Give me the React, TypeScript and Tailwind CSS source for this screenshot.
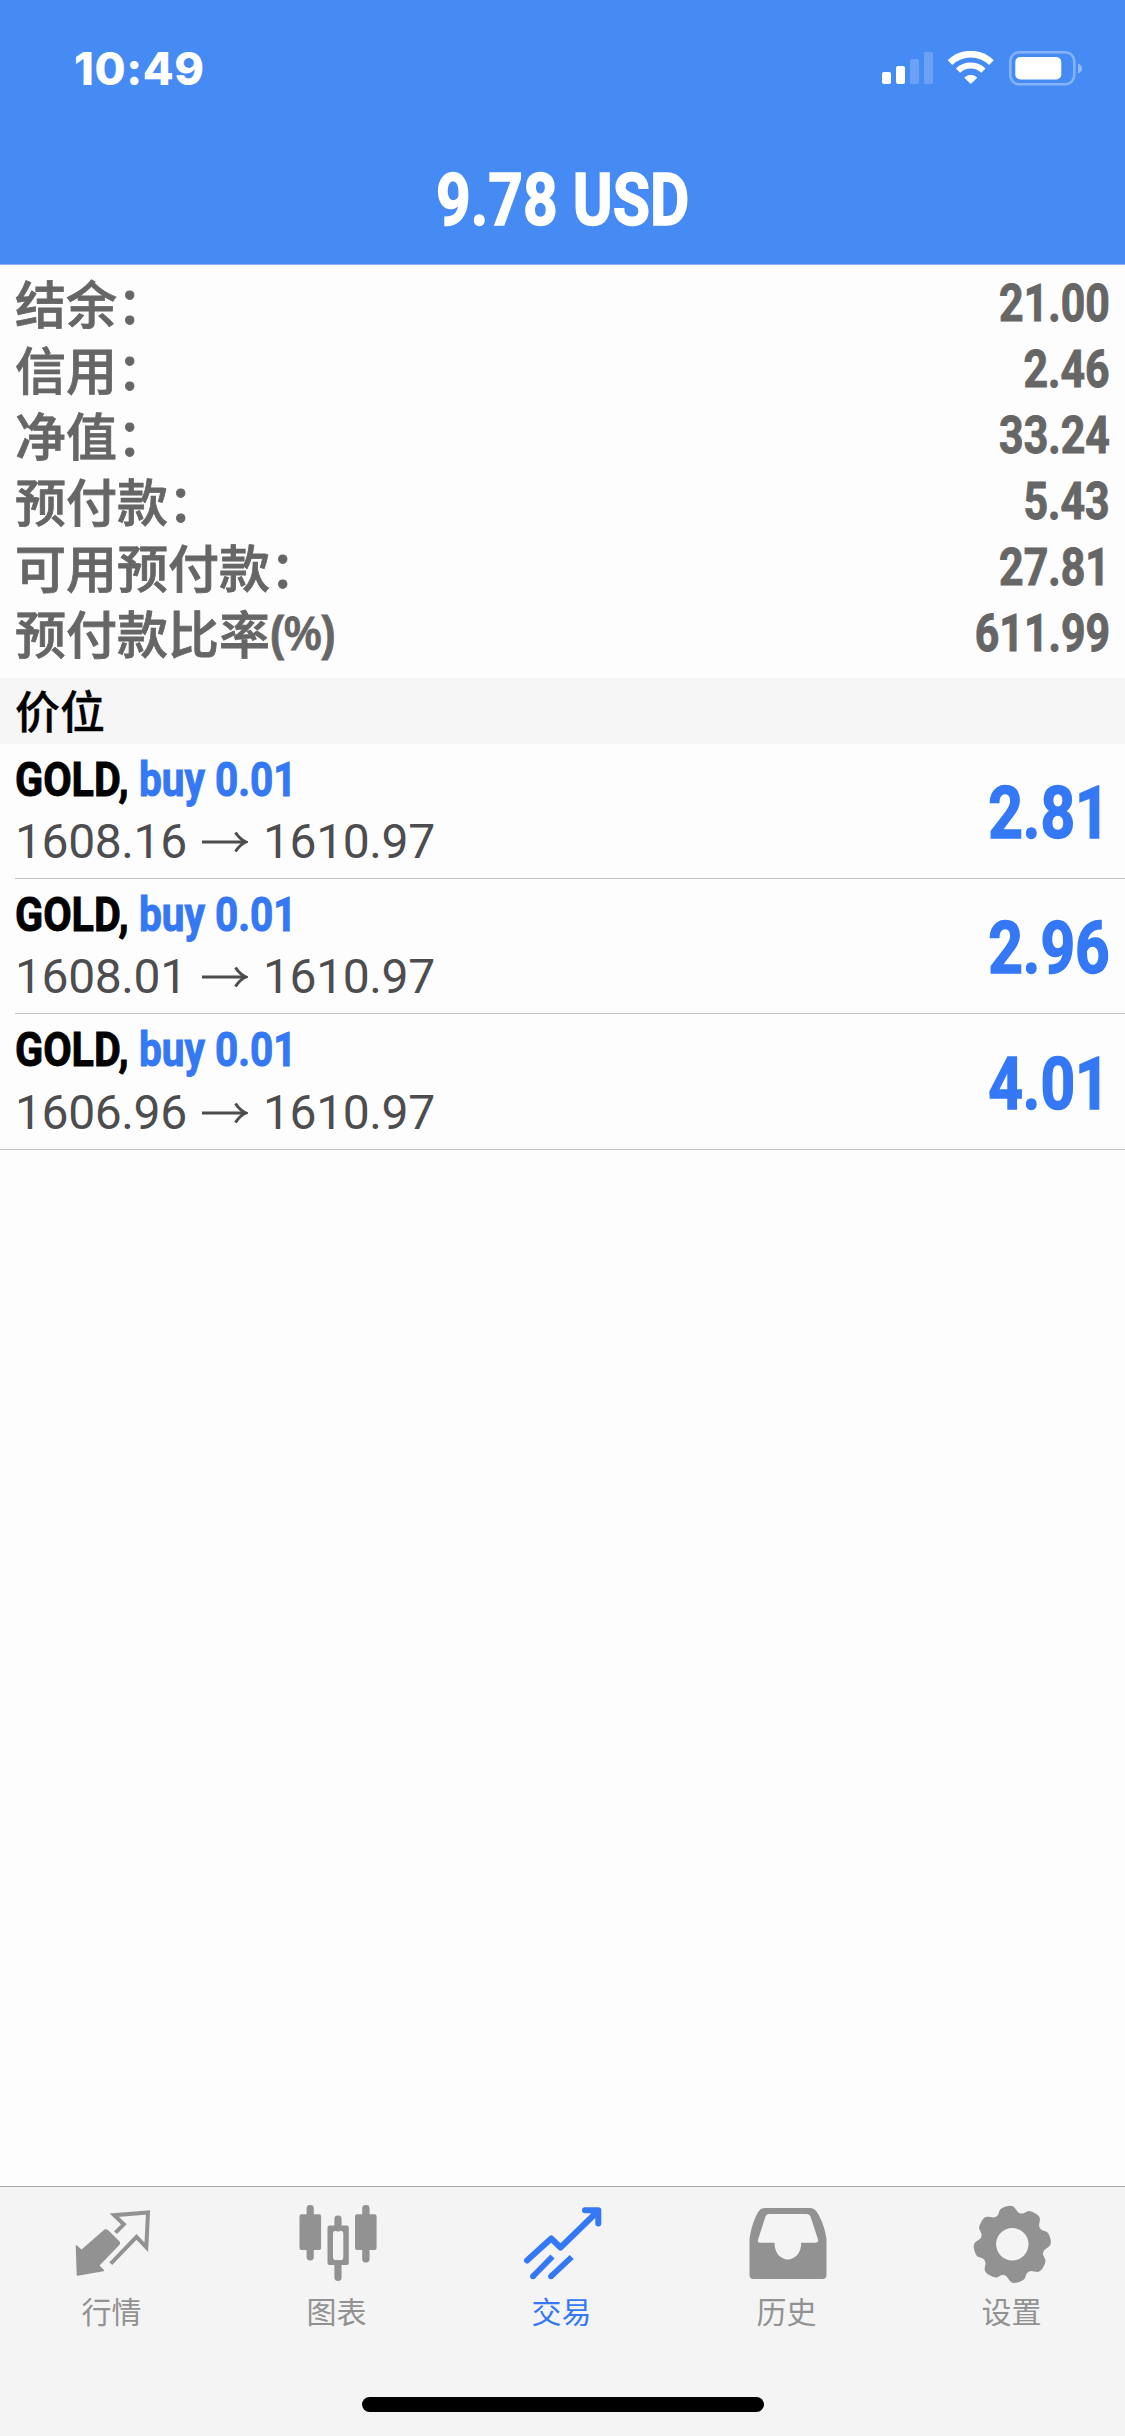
import type { ReactNode } from "react";
import clsx from "clsx";

const summary = [
  { label: "结余：", value: "21.00" },
  { label: "信用：", value: "2.46" },
  { label: "净值：", value: "33.24" },
  { label: "预付款：", value: "5.43" },
  { label: "可用预付款：", value: "27.81" },
  { label: "预付款比率", unit: "(%)", value: "611.99" },
];

const positions = [
  { symbol: "GOLD,", side: "buy 0.01", open: "1608.16", current: "1610.97", profit: "2.81" },
  { symbol: "GOLD,", side: "buy 0.01", open: "1608.01", current: "1610.97", profit: "2.96" },
  { symbol: "GOLD,", side: "buy 0.01", open: "1606.96", current: "1610.97", profit: "4.01" },
];

const QuotesIcon = () => (
  <svg viewBox="0 0 80 80" className="size-20" fill="none">
    <path
      d="M42.5 28.7 50.8 20.3 41.2 11.2 75 8.5 73.3 43.3 63.5 32.8 37.8 59.7"
      stroke="currentColor"
      strokeWidth="4"
    />
    <path
      d="M3.5 42 8.5 46.5 30.5 27.3Q33 25 35.5 27.5L45.5 37.5Q47 39 45.5 40.8L25.5 61.5 30.3 66.5 4.5 71Z"
      fill="currentColor"
      stroke="currentColor"
      strokeWidth="1.6"
      strokeLinejoin="round"
    />
  </svg>
);

const ChartIcon = () => (
  <svg viewBox="0 0 80 80" className="size-20" fill="currentColor">
    <rect x="1.5" y="10.3" width="21.6" height="35.8" rx="2" />
    <rect x="8.6" y="1" width="7.2" height="55.4" rx="3.4" />
    <rect x="57" y="10.3" width="21.6" height="35.8" rx="2" />
    <rect x="64.2" y="1" width="7.4" height="57.4" rx="3.4" />
    <rect x="36.4" y="11.5" width="7.2" height="16" rx="3.4" />
    <rect x="36.4" y="56" width="7.2" height="21" rx="3.4" />
    <path
      fillRule="evenodd"
      d="M31.5 21.6h17.3a2 2 0 0 1 2 2v35.5a2 2 0 0 1-2 2H31.5a2 2 0 0 1-2-2V23.6a2 2 0 0 1 2-2ZM38 26.7a3 3 0 0 0-3 3v23.5a3 3 0 0 0 3 3h4.3a3 3 0 0 0 3-3V29.7a3 3 0 0 0-3-3Z"
    />
  </svg>
);

const TradeIcon = () => (
  <svg viewBox="0 0 80 80" className="size-20" fill="none" stroke="currentColor">
    <path
      d="M4 56.5 28.2 34.5 37.5 43.5 74 8"
      strokeWidth="6"
      strokeLinecap="round"
      strokeLinejoin="round"
    />
    <path d="M62 6.2H75.3V19.5" strokeWidth="6" strokeLinecap="round" strokeLinejoin="round" />
    <path d="M64 5.5H76V17Z" fill="currentColor" stroke="none" />
    <path d="M10 72.3 29.5 52.5M28 72.3 48.7 53" strokeWidth="5.8" />
    <circle cx="10" cy="72.3" r="2.9" fill="currentColor" stroke="none" />
    <circle cx="28" cy="72.3" r="2.9" fill="currentColor" stroke="none" />
  </svg>
);

const HistoryIcon = () => (
  <svg viewBox="0 0 80 80" className="size-20" fill="currentColor">
    <path
      fillRule="evenodd"
      d="M17 4H62Q66 4 68.5 7.5C73 14 77 24 78.5 35V71Q78.5 75 74.5 75H5.5Q1.5 75 1.5 71V35C3 24 6.5 14 10.5 7.5Q12.5 4 17 4ZM20.5 10Q18.5 10 17.5 12.5L9.9 36Q9.2 38.8 12 38.8H26.5C26.5 61 53.2 61 53.2 38.8H67.5Q71 38.8 70 35.5L62.5 12.5Q61.5 10 59 10Z"
    />
  </svg>
);

const polar = (radius: number, degrees: number) => {
  const angle = (degrees * Math.PI) / 180;
  return `${(39.3 + radius * Math.cos(angle)).toFixed(2)} ${(40.3 + radius * Math.sin(angle)).toFixed(2)}`;
};

// eight teeth, turned a little anticlockwise
const gearPath = Array.from({ length: 8 }, (_, i) => {
  const a = i * 45 - 98;
  return `${i === 0 ? "M" : "L"}${polar(36.5, a - 12)}Q${polar(38.3, a - 9)} ${polar(38.5, a)}T${polar(36.5, a + 12)}L${polar(32.6, a + 18)}Q${polar(31.4, a + 22.5)} ${polar(32.6, a + 27)}`;
}).join("");

const SettingsIcon = () => (
  <svg viewBox="0 0 80 80" className="size-20" fill="currentColor">
    <path
      fillRule="evenodd"
      d={`${gearPath}ZM23.1 40.3a16.2 16.2 0 1 0 32.4 0a16.2 16.2 0 1 0-32.4 0Z`}
    />
  </svg>
);

const tabs: { label: string; icon: () => ReactNode; active?: boolean }[] = [
  { label: "行情", icon: QuotesIcon },
  { label: "图表", icon: ChartIcon },
  { label: "交易", icon: TradeIcon, active: true },
  { label: "历史", icon: HistoryIcon },
  { label: "设置", icon: SettingsIcon },
];

const StatusIcons = () => (
  <svg viewBox="0 0 204 36" className="h-9 w-[204px]" fill="currentColor">
    <rect x="2" y="21" width="9" height="12" rx="2" />
    <rect x="16" y="15" width="9" height="18" rx="2" />
    <rect x="30" y="8" width="9" height="25" rx="2" opacity="0.2" />
    <rect x="44" y="1" width="9" height="32" rx="2" opacity="0.2" />
    <g fill="none" stroke="currentColor">
      <path d="M70 11.6A29.5 29.5 0 0 1 111.4 11.6" strokeWidth="6.6" />
      <path d="M78 19.6A18.3 18.3 0 0 1 103.4 19.6" strokeWidth="6" />
    </g>
    <path d="M84.8 26.7A9 9 0 0 1 96.8 26.7L90.8 32.5Z" stroke="currentColor" strokeLinejoin="round" />
    <rect x="130.3" y="1.3" width="64" height="32" rx="9" fill="none" stroke="currentColor" strokeWidth="2.6" opacity="0.35" />
    <path d="M198 12.5Q202 14 202 17.5T198 22.5Z" opacity="0.4" />
    <rect x="135.3" y="6" width="46" height="22.5" rx="5" />
  </svg>
);

const ArrowRight = () => (
  <svg viewBox="0 0 46 22" className="h-[22px] w-[46px] shrink-0" fill="none" stroke="currentColor" strokeWidth="3">
    <path d="M0 11H44M33.5 1.5Q37.5 8 44 11Q37.5 14 33.5 20.5" />
  </svg>
);

export default function App() {
  return (
    <div className="flex h-[2436px] w-[1125px] flex-col overflow-hidden bg-[#fdfdfd] font-['Roboto','Noto_Sans_CJK_SC',sans-serif]">
      <header className="h-[265px] border-b border-[#8fb5f0] bg-[#468bf4] text-white">
        <div className="flex h-[138px] items-center justify-between pr-[41px] pl-[74px]">
          <span className="font-['Inter',sans-serif] text-[45px] font-extrabold tracking-[0.6px]">10:49</span>
          <StatusIcons />
        </div>
        <h1 className="flex h-[126px] items-center justify-center text-[72px] font-bold whitespace-nowrap [-webkit-text-stroke:1.5px]">
          <span className="scale-x-[0.84]">9.78 USD</span>
        </h1>
      </header>

      <dl className="h-[413px] px-[15px] pt-[5px] text-[51px] leading-none text-[#666666]">
        {summary.map((row) => (
          <div key={row.label} className="flex h-[66px] items-center justify-between">
            <dt className="flex items-baseline pt-1.5 font-medium [-webkit-text-stroke:0.8px]">
              {row.label}
              {row.unit && (
                <span className="relative -top-1 origin-left scale-x-[0.88] font-['Liberation_Sans',sans-serif] text-[48px] font-bold">
                  {row.unit}
                </span>
              )}
            </dt>
            <dd className="origin-right scale-x-[0.84] pt-px font-bold [-webkit-text-stroke:1px]">{row.value}</dd>
          </div>
        ))}
      </dl>

      <h2 className="flex h-[66px] shrink-0 items-center bg-[#f6f6f6] px-[15px] pt-1 text-[45px] leading-none font-medium text-black [-webkit-text-stroke:0.3px]">
        价位
      </h2>

      <ul className="flex-1 leading-none">
        {positions.map((p, i) => (
          <li key={i} className={clsx(i === positions.length - 1 ? "border-b border-[#c4c4c6]" : "pl-[15px]")}>
            <div
              className={clsx(
                "flex h-[135px] items-center justify-between pr-[15px]",
                i === positions.length - 1 ? "pl-[15px]" : "border-b border-[#c4c4c6]",
              )}
            >
              <div className="text-[48px]">
                <div className="flex h-[62px] items-center font-bold whitespace-nowrap [-webkit-text-stroke:1px]">
                  <span className="w-[124px] origin-left scale-x-[0.86] text-black">{p.symbol}</span>
                  <span className="origin-left scale-x-[0.845] text-[#3478f3]">{p.side}</span>
                </div>
                <div className="flex h-[63px] items-center text-[#4d4d4f]">
                  <span className="w-[187px] tracking-[-0.4px]">{p.open}</span>
                  <ArrowRight />
                  <span className="ml-[15px] tracking-[-0.4px]">{p.current}</span>
                </div>
              </div>
              <span className="origin-right scale-x-[0.84] pt-1.5 text-[72px] font-bold text-[#3478f6] [-webkit-text-stroke:1.5px]">
                {p.profit}
              </span>
            </div>
          </li>
        ))}
      </ul>

      <footer className="flex h-[250px] shrink-0 flex-col items-center border-t border-[#a9a9a9] bg-[#f4f4f4]">
        <nav className="grid w-full grid-cols-5">
          {tabs.map(({ label, icon: Icon, active }) => (
            <button
              key={label}
              className={clsx("flex flex-col items-center pt-[17px]", active ? "text-[#3478f6]" : "text-[#929292]")}
            >
              <Icon />
              <span className="mt-1 pr-0.5 font-['Noto_Sans_CJK_SC',sans-serif] text-[30px] leading-[44px]">{label}</span>
            </button>
          ))}
        </nav>
        <div className="mt-auto mb-6 h-[15px] w-[402px] rounded-full bg-black" />
      </footer>
    </div>
  );
}
